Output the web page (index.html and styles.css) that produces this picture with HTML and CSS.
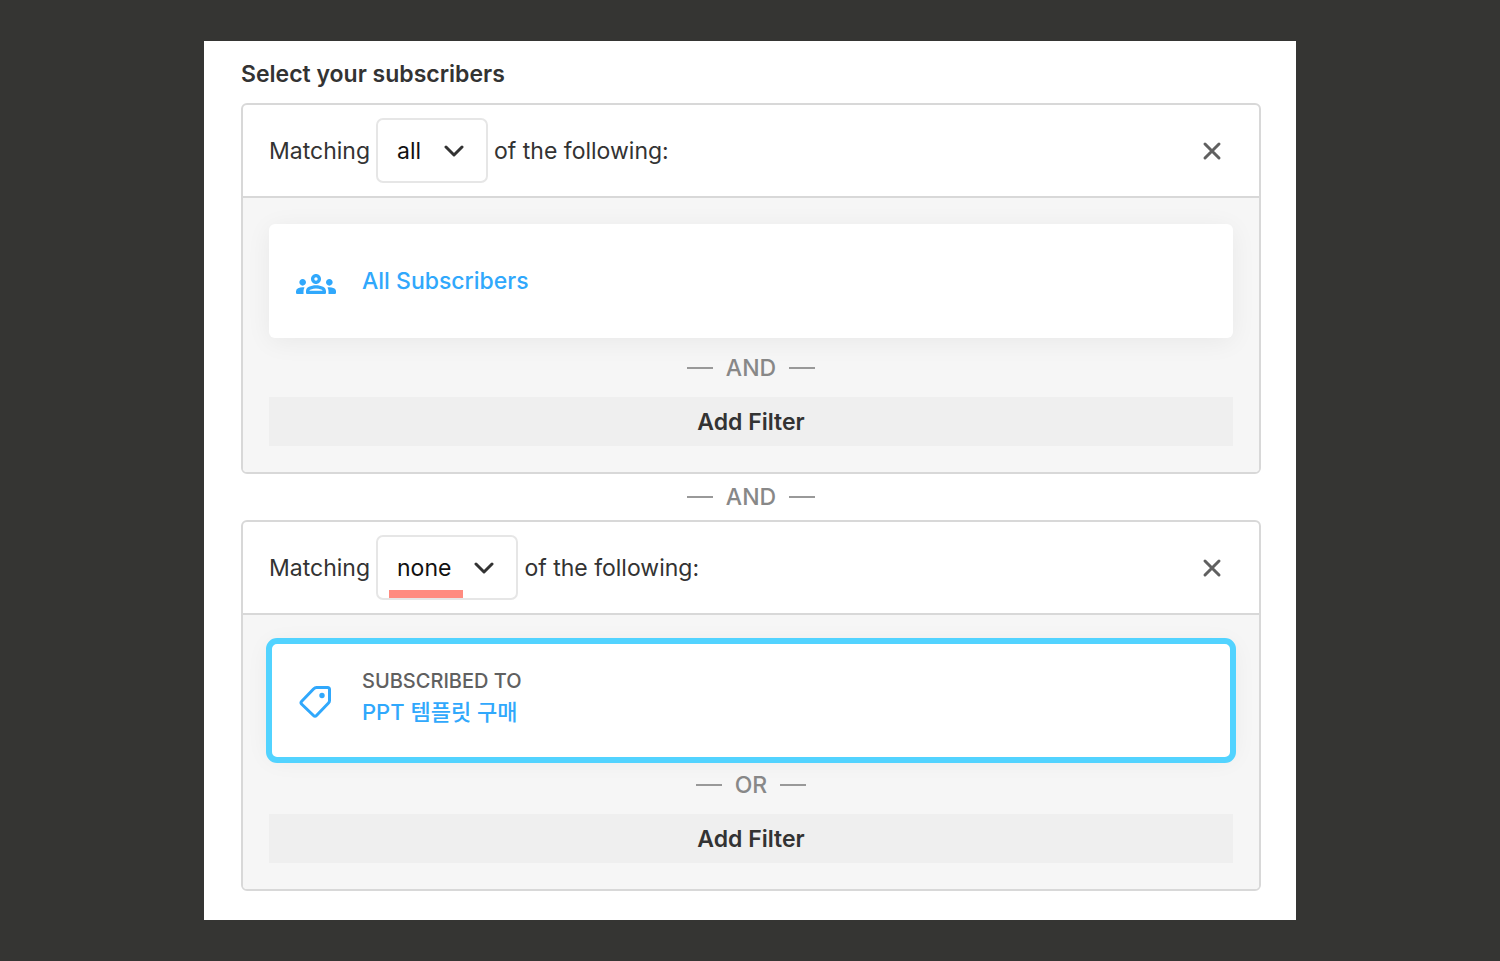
FILE: index.html
```html
<!DOCTYPE html>
<html lang="en">
<head>
<meta charset="utf-8">
<meta name="viewport" content="width=device-width, initial-scale=1">
<title>Select your subscribers</title>
<link rel="stylesheet" href="styles.css">
</head>
<body>
<main class="panel">
  <h1 class="title">Select your subscribers</h1>

  <section class="group">
    <header class="group-header">
      <label for="match-1">Matching</label>
      <span class="select-wrap">
        <select id="match-1" class="select">
          <option selected>all</option>
          <option>any</option>
          <option>none</option>
        </select>
        <svg class="chevron" viewBox="0 0 20 12" aria-hidden="true"><path d="M2 2l8 8 8-8"/></svg>
      </span>
      <span>of the following:</span>
      <button class="close" type="button" aria-label="Remove group">
        <svg viewBox="0 0 20 20" aria-hidden="true"><path d="M3 3l14 14M17 3L3 17"/></svg>
      </button>
    </header>
    <div class="group-body">
      <article class="card">
        <svg class="icon" viewBox="0 0 24 24" aria-hidden="true"><path fill="currentColor" d="M4 13c1.100 0 2-.9 2-2s-.9-2-2-2-2 .9-2 2 .9 2 2 2zm1.130 1.100C4.760 14.040 4.390 14 4 14c-.99 0-1.930.21-2.780.580A2.010 2.010 0 0 0 0 16.430V17.300Q0 18 .7 18H4.500v-1.610c0-.83.23-1.610.63-2.290zM20 13c1.100 0 2-.9 2-2s-.9-2-2-2-2 .9-2 2 .9 2 2 2zm4 3.430c0-.81-.48-1.530-1.220-1.850A6.950 6.950 0 0 0 20 14c-.39 0-.76.04-1.130.1.400.68.630 1.460.630 2.290V18H23.300Q24 18 24 17.300V16.430zM16.240 13.650C15.070 13.130 13.630 12.750 12 12.750s-3.070.39-4.240.9A2.990 2.990 0 0 0 6 16.390V17.300Q6 18 6.700 18H17.300Q18 18 18 17.300V16.390c0-1.180-.68-2.260-1.760-2.740zM8.070 16c.09-.23.13-.39.91-.69.97-.38 1.990-.56 3.020-.56s2.050.18 3.020.56c.77.3.810.460.910.690H8.070zM12 8c.55 0 1 .45 1 1s-.45 1-1 1-1-.45-1-1 .45-1 1-1m0-2C10.340 6 9 7.340 9 9s1.340 3 3 3 3-1.340 3-3-1.340-3-3-3z"/></svg>
        <a class="name" href="#">All Subscribers</a>
      </article>
      <div class="divider">AND</div>
      <button class="add" type="button">Add Filter</button>
    </div>
  </section>

  <div class="divider divider-outer">AND</div>

  <section class="group">
    <header class="group-header">
      <label for="match-2">Matching</label>
      <span class="select-wrap marked">
        <select id="match-2" class="select">
          <option>all</option>
          <option>any</option>
          <option selected>none</option>
        </select>
        <svg class="chevron" viewBox="0 0 20 12" aria-hidden="true"><path d="M2 2l8 8 8-8"/></svg>
      </span>
      <span>of the following:</span>
      <button class="close" type="button" aria-label="Remove group">
        <svg viewBox="0 0 20 20" aria-hidden="true"><path d="M3 3l14 14M17 3L3 17"/></svg>
      </button>
    </header>
    <div class="group-body">
      <article class="card highlighted">
        <svg class="icon" viewBox="0 0 40 40" aria-hidden="true"><path fill="none" stroke="currentColor" stroke-width="3" stroke-linejoin="round" d="M20.500 6.500H31.500Q33.500 6.500 33.500 8.500V19.500Q33.500 21 32.500 22L20.500 34.500Q19 36 17.500 34.500L5.500 23Q4.500 21.500 5.500 20.500L17.500 8Q19 6.500 20.500 6.500Z"/><circle cx="26" cy="14.500" r="2.700" fill="currentColor"/></svg>
        <div class="tag-text">
          <div class="kind">SUBSCRIBED TO</div>
          <a class="name name-tag" href="#" lang="ko">PPT 템플릿 구매</a>
        </div>
      </article>
      <div class="divider">OR</div>
      <button class="add" type="button">Add Filter</button>
    </div>
  </section>
</main>
</body>
</html>
```
FILE: styles.css
```css
* { box-sizing: border-box; }

body {
  margin: 0;
  padding: 41px 204px;
  background: #353533;
  color: #333;
  font-family: Inter, "Noto Sans CJK KR", sans-serif;
  font-size: 23px;
  line-height: 28px;
}

.panel {
  background: #fff;
  padding: 19px 35px 29px 37px;
}

.title {
  margin: 0 0 15px;
  font-size: 23px;
  line-height: 28px;
  font-weight: 600;
}

.group {
  border: 2px solid #d8d8d8;
  border-radius: 6px;
  overflow: hidden;
}

.group-header {
  display: flex;
  align-items: center;
  gap: 6px;
  padding: 13px 26px;
  border-bottom: 2px solid #d8d8d8;
}

.select-wrap {
  position: relative;
  display: flex;
}

.select {
  appearance: none;
  field-sizing: content;
  height: 65px;
  padding: 0 65px 0 19px;
  border: 2px solid #e6e6e6;
  border-radius: 7px;
  background: #fff;
  color: #111;
  font: inherit;
}

.chevron {
  position: absolute;
  right: 24px;
  top: 27px;
  width: 20px;
  height: 12px;
  pointer-events: none;
}

.chevron path,
.close path {
  fill: none;
  stroke: #333;
  stroke-width: 3;
  stroke-linecap: round;
  stroke-linejoin: round;
}

.marked::after {
  content: "";
  position: absolute;
  left: 13px;
  bottom: 2px;
  width: 74px;
  height: 8px;
  background: #ff8b80;
}

.close {
  display: flex;
  margin-left: auto;
  padding: 11px;
  border: 0;
  background: none;
}

.close svg {
  width: 20px;
  height: 20px;
}

.close path { stroke: #606060; }

.group-body {
  padding: 26px;
  background: #f6f6f6;
}

.card {
  position: relative;
  display: flex;
  align-items: center;
  gap: 26px;
  min-height: 114px;
  padding: 0 27px;
  border-radius: 6px;
  background: #fff;
  box-shadow: 0 4px 26px rgba(0, 0, 0, 0.06);
}

.highlighted::before {
  content: "";
  position: absolute;
  inset: -3px -3px -8px;
  border: 6px solid #52d3ff;
  border-radius: 11px;
  background: #fff;
  pointer-events: none;
}

.highlighted > * { position: relative; }

.icon {
  flex: none;
  width: 40px;
  height: 40px;
  margin-top: 6px;
  color: #30a8fc;
}

.name {
  color: #30a8fc;
  font-weight: 550;
  text-decoration: none;
}

.name-tag { font-size: 22px; }

.tag-text {
  display: grid;
  gap: 3px;
  padding-bottom: 4px;
}

.kind {
  color: #606060;
  font-size: 20px;
  font-weight: 500;
}

.divider {
  display: flex;
  align-items: center;
  justify-content: center;
  gap: 13px;
  height: 59px;
  color: #888;
  font-weight: 550;
}

.divider-outer { height: 46px; }

.divider::before,
.divider::after {
  content: "";
  width: 26px;
  height: 2px;
  background: #999;
}

.add {
  display: block;
  width: 100%;
  height: 49px;
  border: 0;
  background: #efefef;
  color: #333;
  font: inherit;
  font-weight: 600;
}

@media (max-width: 900px) {
  body { padding: 24px; }
}
```
